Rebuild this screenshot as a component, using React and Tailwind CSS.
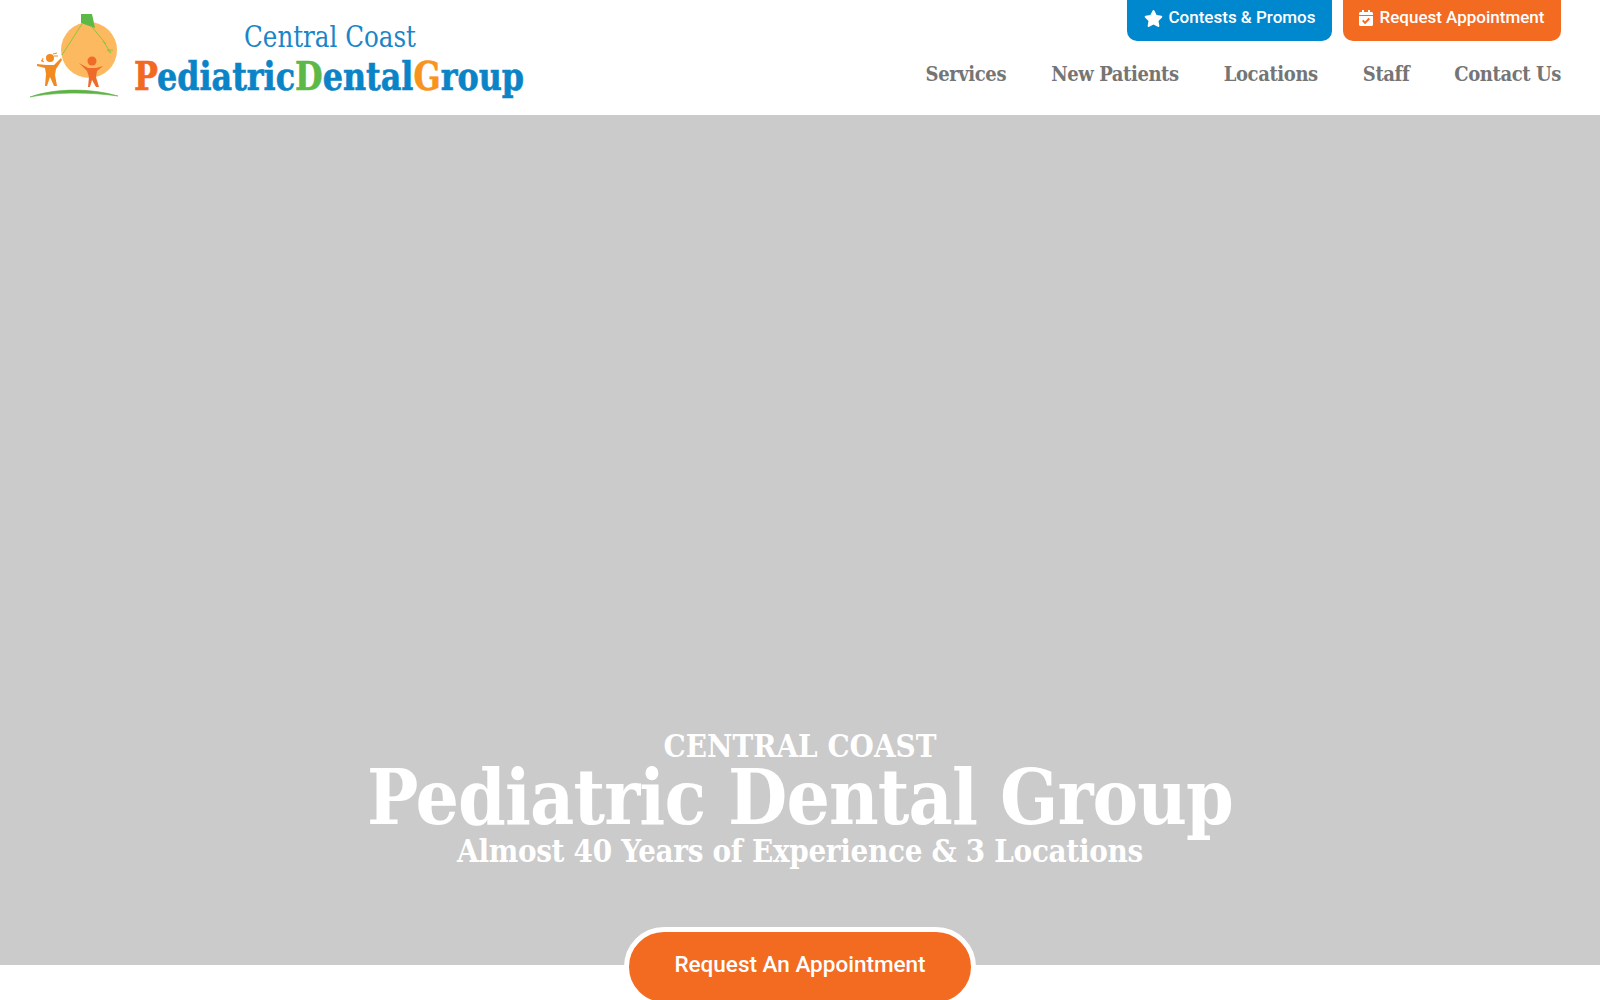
import { FaStar, FaCalendarCheck } from 'react-icons/fa'

const navLinks = ['Services', 'New Patients', 'Locations', 'Staff', 'Contact Us']

function Logo() {
  return (
    <svg width="540" height="115" viewBox="0 0 540 115" className="block shrink-0">
      <circle cx="89" cy="50" r="28" fill="#fdb95f" />
      <path d="M62 55 L82 24 M92 27 L106 44 L103 41 L111 53 L107 50 L113 50" fill="none" stroke="#8cc63f" strokeWidth="1" />
      <path d="M81 14 L92 14 L95 28 L81 23 Z" fill="#5cb947" />
      {/* left kid */}
      <circle cx="50" cy="58" r="4" fill="#f18a21" />
      <path d="M37 64 L46 65 L54 65 L61 58 L62 60 L56 69 L55 75 L57 86 L54 86 L50 77 L47 86 L45 86 L46 74 L45 68 L37 66 Z" fill="#f18a21" />
      <path d="M42 62 L43 58 M44 62 L41 60 M53 54 L57 53 M54 56 L58 56" stroke="#f18a21" strokeWidth="1" fill="none" />
      {/* right kid */}
      <circle cx="92" cy="61" r="4.5" fill="#ee6b2a" />
      <path d="M79 63 L88 68 L96 68 L103 66 L97 71 L96 77 L99 87 L96 87 L92 80 L90 87 L88 87 L89 77 L87 71 Z" fill="#ee6b2a" />
      <path d="M30 97 C55 88 90 88 118 96 C90 92 55 92 30 97 Z" fill="#5fb246" stroke="#5fb246" strokeWidth="0.6" />
      <text x="244" y="47" textLength="172" lengthAdjust="spacingAndGlyphs" fontFamily="'DejaVu Serif Condensed', 'DejaVu Serif', serif" fontSize="29" fill="#1a86c7">
        Central Coast
      </text>
      <text x="134" y="90" textLength="390" lengthAdjust="spacingAndGlyphs" fontFamily="'DejaVu Serif Condensed', 'DejaVu Serif', serif" fontWeight="700" fontSize="40" fill="#0a84c6" stroke="#0a84c6" strokeWidth="0.6">
        <tspan fill="#f26a21" stroke="#f26a21">P</tspan>ediatric<tspan fill="#5cb947" stroke="#5cb947">D</tspan>ental<tspan fill="#f7941d" stroke="#f7941d">G</tspan>roup
      </text>
    </svg>
  )
}

export default function App() {
  return (
    <div className="h-[1000px] overflow-hidden bg-white font-['Roboto',sans-serif]">
      <header className="h-[115px] flex justify-between pr-[39px]">
        <Logo />
        <div className="flex flex-col items-end">
          <div className="flex gap-[11px] text-white text-[17px] font-medium">
            <a className="h-[41px] w-[205px] pb-[5px] flex items-center justify-center gap-[6px] rounded-b-[10px] bg-[#0088cf]">
              <FaStar size={19} /> Contests &amp; Promos
            </a>
            <a className="h-[41px] w-[218px] pb-[5px] pr-[2px] flex items-center justify-center gap-[6px] rounded-b-[10px] bg-[#f36a21]">
              <FaCalendarCheck size={16} /> Request Appointment
            </a>
          </div>
          <nav className="flex gap-[45px] mt-[19px] font-['DejaVu_Serif_Condensed','DejaVu_Serif',serif] font-bold text-[20px] leading-[28px] text-[#757575] tracking-[-0.4px]">
            {navLinks.map(link => (
              <a key={link}>{link}</a>
            ))}
          </nav>
        </div>
      </header>

      <section className="h-[850px] bg-[#cbcbcb] flex flex-col items-center justify-end text-white font-['DejaVu_Serif_Condensed','DejaVu_Serif',serif] font-bold">
        <p className="text-[31px] leading-[36px] mb-px">CENTRAL COAST</p>
        <h1 className="text-[76px] leading-[66px] tracking-[-0.9px]">Pediatric Dental Group</h1>
        <p className="text-[31px] leading-[40px] tracking-[-0.3px]">Almost 40 Years of Experience &amp; 3 Locations</p>
        <a className="relative mt-[56px] -mb-[42px] w-[352px] h-[80px] pb-[4px] shrink-0 flex items-center justify-center rounded-[40px] border-[5px] border-white bg-[#f36a21] font-['Roboto',sans-serif] font-medium text-[22.5px]">
          Request An Appointment
        </a>
      </section>
    </div>
  )
}
